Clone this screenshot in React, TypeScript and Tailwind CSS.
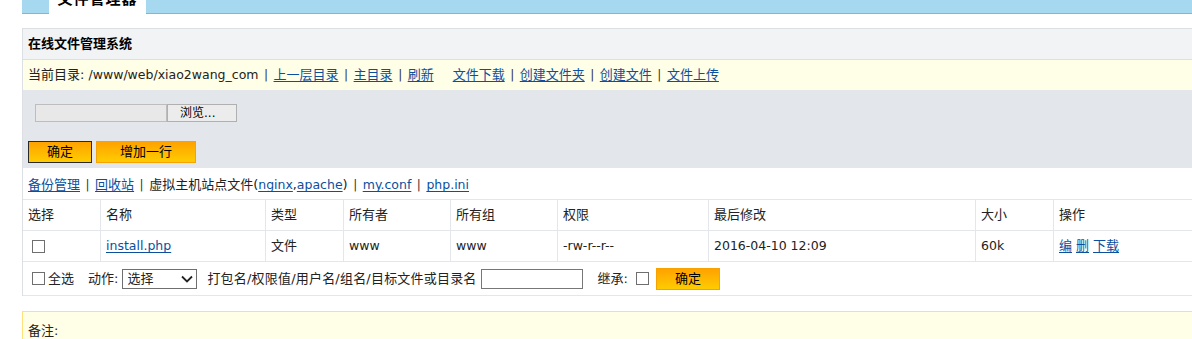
import React from 'react';

const font = "font-['DejaVu_Sans','Noto_Sans_CJK_SC',sans-serif]";

// latin runs sit a bit smaller than the CJK text
const L = ({ children }: { children: React.ReactNode }) => <span className="text-[12.5px]">{children}</span>;

const Sep = () => <span className="mx-[5.5px] text-[12px] text-[#333]">|</span>;

const A = ({ children }: { children: React.ReactNode }) => (
    <a href="#" className="text-[#0b4f9e] underline underline-offset-2">{children}</a>
);

const Box = () => <span className="inline-block w-[13px] h-[13px] border border-[#6f6f6f] bg-white" />;

const OrangeBtn = ({ label, w, border }: { label: string; w: string; border: string }) => (
    <div className={`${w} ${border} h-[22px] flex items-center justify-center text-[13px] text-black bg-gradient-to-b from-[#ffa200] to-[#ffcc00]`}>
        {label}
    </div>
);

const cols = ['选择', '名称', '类型', '所有者', '所有组', '权限', '最后修改', '大小', '操作'];

const cell = 'h-[31px] flex items-center pl-[5px] border-b border-l border-[#e3e6ea]';

export default function App() {
    return (
        <div className={`${font} w-full h-[339px] overflow-hidden bg-white text-[13px] text-[#222]`}>
            {/* top bar with tab */}
            <div className="ml-[22px] h-[14px] bg-[#a6d9ef] border-b border-[#74bbde] flex">
                <div className="ml-[27px] w-[97px] h-[14px] bg-white overflow-hidden flex justify-center">
                    <span className="text-[15px] font-bold leading-[15px] -mt-[8px] text-black tracking-[1px]">文件管理器</span>
                </div>
            </div>

            <div className="ml-[22px] mt-[14px] border-l border-t border-[#dcdfe4]">
                {/* header */}
                <div className="h-[31px] bg-[#f2f3f5] border-b border-[#dcdfe4] flex items-center pl-[5px] text-[13px] font-bold text-black">
                    在线文件管理系统
                </div>

                {/* current dir */}
                <div className="h-[30px] bg-[#fffee6] flex items-center pl-[5px] whitespace-nowrap">
                    <span>当前目录:&nbsp;</span>
                    <L>/www/web/xiao2wang_com</L>
                    <Sep />
                    <A>上一层目录</A>
                    <Sep />
                    <A>主目录</A>
                    <Sep />
                    <A>刷新</A>
                    <span className="w-[19px]" />
                    <A>文件下载</A>
                    <Sep />
                    <A>创建文件夹</A>
                    <Sep />
                    <A>创建文件</A>
                    <Sep />
                    <A>文件上传</A>
                </div>

                {/* upload area */}
                <div className="h-[78px] bg-[#e3e6ea] pt-[14px]">
                    <div className="ml-[12px] flex h-[18px]">
                        <div className="w-[132px] h-full bg-[#e8e8e8] border border-[#bdbdbd]" />
                        <div className="w-[70px] h-full bg-[#ececec] border border-[#b0b0b0] flex items-center pl-[12px] text-[12px] text-black">
                            浏览...
                        </div>
                    </div>
                    <div className="ml-[5px] mt-[19px] flex gap-[4px]">
                        <OrangeBtn label="确定" w="w-[64px]" border="border border-[#2a2a2a]" />
                        <OrangeBtn label="增加一行" w="w-[100px]" border="border border-[#f7a200]" />
                    </div>
                </div>

                {/* links */}
                <div className="h-[32px] pt-[3px] border-b border-[#e3e6ea] flex items-center pl-[5px] whitespace-nowrap">
                    <A>备份管理</A>
                    <Sep />
                    <A>回收站</A>
                    <Sep />
                    <span>虚拟主机站点文件(</span>
                    <A><L>nginx</L></A>
                    <L>,</L>
                    <A><L>apache</L></A>
                    <span>)</span>
                    <Sep />
                    <A><L>my.conf</L></A>
                    <Sep />
                    <A><L>php.ini</L></A>
                </div>

                {/* table */}
                <div className="grid grid-cols-[77px_165px_78px_107px_107px_151px_267px_78px_1fr]">
                    {cols.map((c, i) => (
                        <div key={c} className={`${cell} ${i === 0 ? 'border-l-0' : ''}`}>
                            {c}
                        </div>
                    ))}
                    <div className="h-[31px] flex items-center pl-[9px] border-b border-[#e3e6ea]"><Box /></div>
                    <div className={cell}><A><L>install.php</L></A></div>
                    <div className={cell}>文件</div>
                    <div className={cell}><L>www</L></div>
                    <div className={cell}><L>www</L></div>
                    <div className={cell}><L>-rw-r--r--</L></div>
                    <div className={cell}><L>2016-04-10 12:09</L></div>
                    <div className={cell}><L>60k</L></div>
                    <div className={`${cell} gap-[4px]`}>
                        <A>编</A><A>删</A><A>下载</A>
                    </div>
                </div>

                {/* actions */}
                <div className="h-[34px] border-b border-[#e3e6ea] flex items-center pl-[9px] whitespace-nowrap">
                    <Box />
                    <span className="ml-[3px]">全选</span>
                    <span className="ml-[14px]">动作:</span>
                    <div className="ml-[4px] w-[75px] h-[20px] border border-[#6f6f6f] flex items-center justify-between pl-[4px] pr-[3px]">
                        <span>选择</span>
                        <svg width="12" height="8" viewBox="0 0 12 8" fill="none" stroke="#222" strokeWidth="1.8">
                            <path d="M1 1.5 L6 6.5 L11 1.5" />
                        </svg>
                    </div>
                    <span className="ml-[10px] tracking-[0.2px]">打包名/权限值/用户名/组名/目标文件或目录名</span>
                    <div className="ml-[4px] w-[102px] h-[20px] border border-[#777] bg-white" />
                    <span className="ml-[15px]">继承:</span>
                    <span className="ml-[8px] flex"><Box /></span>
                    <div className="ml-[7px]">
                        <OrangeBtn label="确定" w="w-[64px]" border="border border-[#f7a200]" />
                    </div>
                </div>
            </div>

            {/* remarks */}
            <div className="ml-[22px] mt-[15px] h-[40px] bg-[#fffee6] border-t border-l border-[#ffe07a] pl-[5px] pt-[9px]">
                备注:
            </div>
        </div>
    );
}
